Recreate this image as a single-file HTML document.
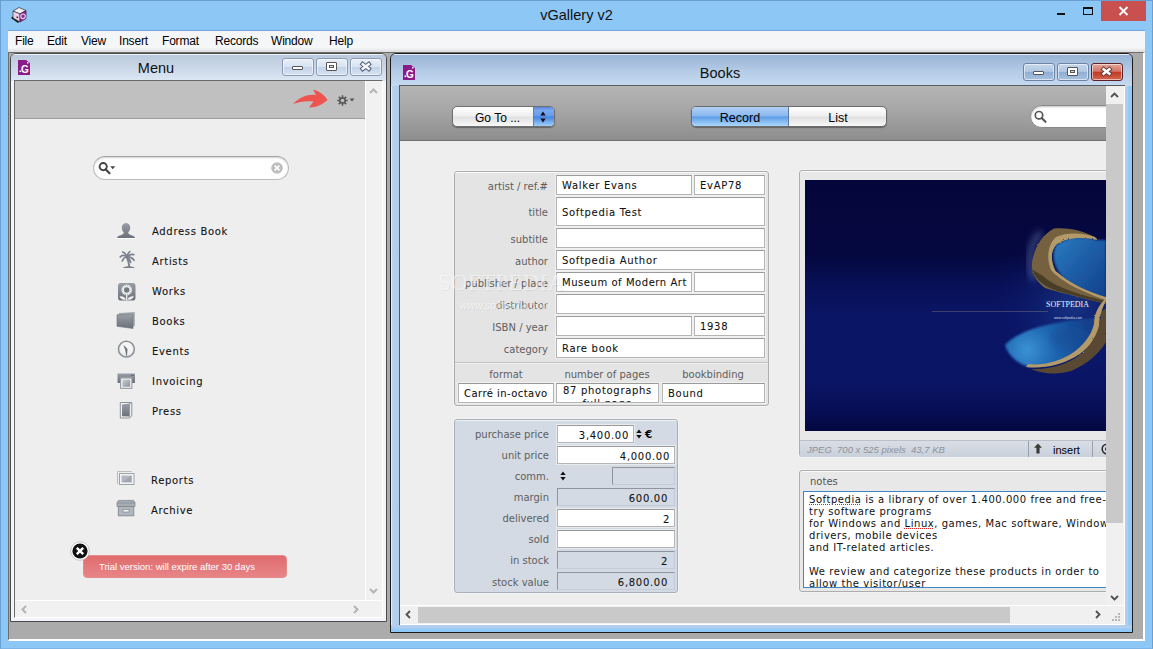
<!DOCTYPE html>
<html><head><meta charset="utf-8"><title>vGallery v2</title>
<style>
*{box-sizing:border-box;margin:0;padding:0}
html,body{width:1153px;height:649px;overflow:hidden}
body{position:relative;background:#8cc7f6;font-family:"Liberation Sans",sans-serif;color:#000}
.abs,.abs-all *{position:absolute}
div,span,svg{position:absolute}
#frame{left:0;top:0;width:1153px;height:649px;border:1px solid #6a9fd3;border-bottom-color:#7fb4e6;background:#8cc7f6}
#apptitle{left:0;top:5px;width:1153px;text-align:center;font-size:14.5px;color:#111;line-height:20px}
#menubar{left:8px;top:31px;width:1137px;height:21px;background:linear-gradient(#f4f5f7,#f6f7f9 80%,#dcdcdc);font-size:12px;line-height:20px;white-space:nowrap;letter-spacing:-0.2px}
#menubar span{top:0}
#mdi{left:8px;top:52px;width:1137px;height:589px;background:#ababab;border:1px solid;border-width:1px 2px 2px 1px;border-color:#6e6e6e #fff #fff #6e6e6e}
.v{font-family:"DejaVu Sans","Liberation Sans",sans-serif}
.cwtitle{font-size:14.5px;text-align:center;color:#111;line-height:18px}
.capbtn{border:1px solid #8a9ab5;border-radius:3px;height:18px;width:32px;background:linear-gradient(#e8eff8,#d7e3f2 48%,#c3d3e8 52%,#d6e2f1);box-shadow:inset 0 0 0 1px rgba(255,255,255,.55)}
.bb{background:linear-gradient(#c6d7ed,#b1c7e3 46%,#8faed4 52%,#a8c1e0);border-color:#6f83a5}
.mi{-webkit-text-stroke:.1px #111;left:152px;font-size:10px;letter-spacing:.68px;line-height:14px;white-space:nowrap;color:#111}
.lbl{margin-top:1px;font-size:10px;line-height:14px;color:#5e5e5e;text-align:right;white-space:nowrap}
.fld{-webkit-text-stroke:.08px #111;padding-top:1px;background:#fff;border:1px solid #b4b4b4;border-top-color:#9a9a9a;font-size:10px;letter-spacing:.7px;line-height:18px;padding-left:5px;white-space:nowrap;overflow:hidden;color:#111;box-shadow:0 0 0 1px rgba(255,255,255,.45)}
.num{text-align:right;padding-right:4px;padding-left:0}
.ro{background:#d3dae3;box-shadow:none;border-color:#8e959e #c5ccd5 #c5ccd5 #8e959e}
</style></head><body>
<div id="frame"></div>
<!-- app icon -->
<svg style="left:10px;top:6px" width="18" height="18" viewBox="0 0 18 18"><polygon points="1,12 8,17 9.500,15.500 2.500,10.500" fill="#151515"/><polygon points="3,5 9,1.500 16,4.500 10,8" fill="#f0ecf0" stroke="#34303a" stroke-width=".7"/><polygon points="3,5 10,8 10,16 3,12" fill="#e9d2e6" stroke="#34303a" stroke-width=".7"/><polygon points="10,8 16,4.500 16,12.500 10,16" fill="#8f2a92" stroke="#3a1a40" stroke-width=".7"/><circle cx="13" cy="10.300" r="2.300" fill="none" stroke="#f0c9ee" stroke-width="1.100"/><rect x="6.500" y="10.500" width="1.600" height="1.600" fill="#3a2a3a"/></svg>
<div id="apptitle">vGallery v2</div>
<!-- app caption buttons -->
<div style="left:1057px;top:13px;width:8px;height:2px;background:#111"></div>
<div style="left:1083px;top:7px;width:10px;height:8px;border:1px solid #111;border-top-width:2px"></div>
<div style="left:1101px;top:1px;width:45px;height:20px;background:#c8504f"></div>
<svg style="left:1118px;top:6px" width="11" height="10" viewBox="0 0 11 10"><path d="M1.5 1 L9.5 9 M9.5 1 L1.5 9" stroke="#fff" stroke-width="1.8"/></svg>
<div style="left:8px;top:30px;width:1137px;height:1px;background:#6ea8de"></div>
<div id="menubar"><span style="left:7px">File</span><span style="left:39px">Edit</span><span style="left:73px">View</span><span style="left:111px">Insert</span><span style="left:154px">Format</span><span style="left:207px">Records</span><span style="left:263px">Window</span><span style="left:321px">Help</span></div>
<div id="mdi"></div>

<!-- ================= MENU WINDOW ================= -->
<div id="mw" style="left:10px;top:53px;width:377px;height:569px;border:1px solid #4a4a4a;border-radius:6px 6px 0 0;background:#f3f5f9;overflow:hidden">
  <div style="left:0;top:0;width:375px;height:27px;background:linear-gradient(#eef3f9 0,#eef3f9 1px,#bac9dc 1px,#cad7e7 50%,#dde8f4)"></div>
</div>
<svg style="left:18px;top:60px" width="12" height="15" viewBox="0 0 12 15"><path d="M0 0H8L12 3V15H0Z" fill="#8b1a8b"/><text x="3" y="13" font-family="Liberation Sans" font-weight="bold" font-size="10" fill="#fff">G</text><rect x="1.5" y="10.5" width="1.6" height="1.6" fill="#fff"/><rect x="9" y="2" width="1.5" height="1.5" fill="#fff"/></svg>
<div class="cwtitle" style="left:106px;top:59px;width:100px">Menu</div>
<div class="capbtn" style="left:282px;top:58px"></div>
<div class="capbtn" style="left:316px;top:58px"></div>
<div class="capbtn" style="left:350px;top:58px"></div>
<div style="left:292px;top:66px;width:11px;height:4px;border:1px solid #555;background:#fff;border-radius:1px"></div>
<div style="left:326px;top:62px;width:11px;height:9px;border:1px solid #555;background:#fff;border-radius:1px"></div>
<div style="left:329px;top:65px;width:5px;height:3px;border:1px solid #555;background:#dde6f1"></div>
<svg style="left:359px;top:61px" width="14" height="11" viewBox="0 0 14 11"><path d="M3.700 3.200 L9.700 7.800 M9.700 3.200 L3.700 7.800" stroke="#56607a" stroke-width="4.400" stroke-linecap="square"/><path d="M3.700 3.200 L9.700 7.800 M9.700 3.200 L3.700 7.800" stroke="#f6f8fb" stroke-width="2.400" stroke-linecap="square"/></svg>
<!-- menu content -->
<div id="mc" style="left:14px;top:80px;width:369px;height:538px;border:1px solid;border-color:#6b6b6b #fff #fff #6b6b6b;background:#eeeeee;overflow:hidden">
  <div style="left:0;top:0;width:350px;height:38px;background:#c0c0c0;border-bottom:1px solid #9d9d9d"></div>
  <!-- vscroll -->
  <div style="left:350px;top:0;width:17px;height:520px;background:#f1f1f1;border-left:1px solid #fff"></div>
  <svg style="left:354px;top:7px" width="9" height="6" viewBox="0 0 9 6"><path d="M1 5 L4.5 1.5 L8 5" stroke="#b4b4b4" stroke-width="2" fill="none"/></svg>
  <svg style="left:354px;top:507px" width="9" height="6" viewBox="0 0 9 6"><path d="M1 1 L4.5 4.5 L8 1" stroke="#b4b4b4" stroke-width="2" fill="none"/></svg>
  <!-- hscroll -->
  <div style="left:0;top:519px;width:367px;height:18px;background:#f1f1f1;border-top:1px solid #fff"></div>
  <svg style="left:6px;top:524px" width="6" height="9" viewBox="0 0 6 9"><path d="M5 1 L1.5 4.5 L5 8" stroke="#b4b4b4" stroke-width="2" fill="none"/></svg>
  <svg style="left:338px;top:524px" width="6" height="9" viewBox="0 0 6 9"><path d="M1 1 L4.5 4.5 L1 8" stroke="#b4b4b4" stroke-width="2" fill="none"/></svg>
</div>
<!-- red arrow + gear -->
<svg style="left:292px;top:88px" width="38" height="22" viewBox="0 0 38 22"><path d="M1 16 C8 9 16 6 24 7 L21 1.5 C27 3 33 7 35.5 12 C31 16 25 19.5 17 19.5 L21.5 13.5 C14 12.5 7 14 1 16Z" fill="#ee5350"/></svg>
<svg style="left:336.500px;top:94.500px" width="11" height="11" viewBox="0 0 12 12"><g stroke="#555" stroke-width="1.7"><path d="M6 0.3V11.7M0.3 6H11.7M2 2L10 10M10 2L2 10"/></g><circle cx="6" cy="6" r="3.6" fill="#555"/><circle cx="6" cy="6" r="2" fill="#c0c0c0"/></svg>
<svg style="left:349px;top:98px" width="6" height="4" viewBox="0 0 6 4"><path d="M0.5 0.5H5.5L3 3.5Z" fill="#555"/></svg>
<!-- search box -->
<div style="left:93px;top:156px;width:196px;height:24px;border:1px solid #bcbcbc;border-top-color:#a2a2a2;border-radius:12px;background:#fff;box-shadow:inset 0 1px 2px rgba(0,0,0,.18)"></div>
<svg style="left:98px;top:161px" width="18" height="14" viewBox="0 0 18 14"><circle cx="5.2" cy="5.6" r="3.6" fill="none" stroke="#444" stroke-width="1.9"/><path d="M7.8 8.4 L11.5 12.3" stroke="#444" stroke-width="2.2" stroke-linecap="round"/><path d="M12.2 5.2H17.2L14.7 8.2Z" fill="#444"/></svg>
<svg style="left:271px;top:162px" width="12" height="12" viewBox="0 0 12 12"><circle cx="6" cy="6" r="5.8" fill="#bdbdbd"/><path d="M3.6 3.6L8.4 8.4M8.4 3.6L3.6 8.4" stroke="#fff" stroke-width="1.6"/></svg>
<!-- menu items -->
<div class="mi v" style="top:225px">Address Book</div>
<div class="mi v" style="top:255px">Artists</div>
<div class="mi v" style="top:285px">Works</div>
<div class="mi v" style="top:315px">Books</div>
<div class="mi v" style="top:345px">Events</div>
<div class="mi v" style="top:375px">Invoicing</div>
<div class="mi v" style="top:405px">Press</div>
<div class="mi v" style="top:474px;left:151px">Reports</div>
<div class="mi v" style="top:504px;left:151px">Archive</div>
<svg style="left:0;top:0;pointer-events:none" width="400" height="649" viewBox="0 0 400 649">
 <defs>
  <linearGradient id="ig" x1="0" y1="0" x2="0" y2="1"><stop offset="0" stop-color="#9a9fa6"/><stop offset="1" stop-color="#6b7079"/></linearGradient>
  <linearGradient id="ig2" x1="0" y1="0" x2="1" y2="1"><stop offset="0" stop-color="#c9ccd1"/><stop offset="1" stop-color="#8e939b"/></linearGradient>
 </defs>
 <!-- address book: person -->
 <path d="M126 223 C123.200 223 121.800 225.200 121.800 227.600 C121.800 229.800 122.600 231.600 123.800 232.600 C123.800 234 122.500 234.600 120.500 235.300 C118.500 236 117.200 236.600 117 238 L135 238 C134.800 236.600 133.500 236 131.500 235.300 C129.500 234.600 128.200 234 128.200 232.600 C129.400 231.600 130.200 229.800 130.200 227.600 C130.200 225.200 128.800 223 126 223Z" fill="url(#ig)"/>
 <rect x="117" y="238" width="18" height="1" fill="#fff"/>
 <!-- artists: palm -->
 <g fill="none" stroke="#7b8189" stroke-width="1.700" stroke-linecap="round">
  <path d="M127 257.500 C128.300 260.500 129 263.500 129.300 266.500" stroke-width="1.900"/>
  <path d="M127 257 C124.500 255 122 255 120.300 256.800"/>
  <path d="M127 257 C124.800 257.200 123 258.800 122.300 261"/>
  <path d="M127 257 C126.300 254.500 124.800 252.800 122.800 252"/>
  <path d="M127 257 C127.300 254.500 128.300 252.600 129.800 251.600"/>
  <path d="M127 257 C129 254.800 131.500 254 133.800 254.600"/>
  <path d="M127 257 C130 256.800 132.500 258 134 260.300"/>
  <path d="M127 257.500 C129 258.600 130.300 260.300 130.600 262.400"/>
 </g>
 <path d="M122.500 268 C125 265.700 132.500 265.700 135 268Z" fill="#7b8189"/>
 <!-- works: sunflower tile -->
 <rect x="118" y="283" width="17.500" height="17.500" rx="2.800" fill="url(#ig)"/>
 <g stroke="#f0f0f0" stroke-width="1.300"><path d="M126.700 284.600V295.400M121.300 290H132.100M122.900 286.200L130.500 293.800M130.500 286.200L122.900 293.800M124.600 285L128.800 295M128.800 285L124.600 295M121.700 287.900L131.700 292.100M131.700 287.900L121.700 292.100"/></g>
 <circle cx="126.700" cy="290" r="2.700" fill="#737881"/>
 <path d="M126.700 295V300.500" stroke="#f0f0f0" stroke-width="1.300"/>
 <path d="M126 299.500 C124.500 296.800 122 296 119.500 296.500 C120.500 299 123 300.300 126 299.500Z M127.400 299.500 C128.900 296.800 131.400 296 133.900 296.500 C132.900 299 130.400 300.300 127.400 299.500Z" fill="#f0f0f0"/>
 <!-- books -->
 <path d="M118.800 313 L134.800 312 L134.800 326 L132.800 326.500 L132.800 314.300 L118.800 314.800Z" fill="#a4a9b0"/>
 <path d="M117 314.800 L133 314.200 L133 328.500 L117 326.300Z" fill="url(#ig)"/>
 <path d="M117 314.800 L133 314.200 L133 328.500 L117 326.300Z" fill="none" stroke="#6b7079" stroke-width=".6"/>
 <!-- events: clock -->
 <circle cx="126.400" cy="349.200" r="7.900" fill="#eaeaea" stroke="#8a8f97" stroke-width="1.500"/>
 <circle cx="126.400" cy="348.200" r="6.200" fill="#f6f6f6" opacity=".8"/>
 <path d="M124 345.800 L127.100 349 L126.600 355.500 L125.600 349.800 Z" fill="#6b7079" stroke="#6b7079" stroke-width=".8" stroke-linejoin="round"/>
 <!-- invoicing: printer -->
 <path d="M117.500 373.500 H135 V383 H132 V377.800 H120.500 V383 H117.500Z" fill="url(#ig)"/>
 <rect x="131.300" y="374.800" width="2.400" height="1" fill="#555b63"/>
 <rect x="120.600" y="378" width="11.300" height="10.300" fill="#f4f4f4" stroke="#8d9299" stroke-width="1"/>
 <rect x="122.400" y="379.600" width="7.800" height="7.200" fill="url(#ig2)"/>
 <!-- press -->
 <path d="M120.300 402.500 L131.800 402.500 L131.800 416 L129 418 L120.300 418Z" fill="#f4f4f4" stroke="#8d9299" stroke-width="1"/>
 <path d="M122 404.500 L129.600 403.600 L129.600 416.600 L122 416.300Z" fill="url(#ig)"/>
 <path d="M129.600 403.600 L131.800 402.500 M129.600 416.600 L129.600 403.600" stroke="#8d9299" stroke-width=".8"/>
 <!-- reports -->
 <path d="M117.500 484 V471.500 H131.500" fill="none" stroke="#b9bdc3" stroke-width="1"/>
 <rect x="119.500" y="473.500" width="14.500" height="11" fill="#f4f4f4" stroke="#9da2a9" stroke-width="1"/>
 <rect x="121.500" y="475.500" width="10.500" height="7" fill="#b2b7bf"/>
 <path d="M122.500 482 L131 476 L131 482Z" fill="#a1a6ae"/>
 <!-- archive -->
 <path d="M118.500 500.400 H133.500 L135 502.600 V506.500 H117 V502.600Z" fill="#a7acb3" stroke="#858a92" stroke-width=".8"/>
 <rect x="118.300" y="506.500" width="15.500" height="9.300" fill="#b1b6bd" stroke="#858a92" stroke-width=".9"/>
 <rect x="123" y="509.500" width="6" height="2.500" fill="#f2f2f2" stroke="#858a92" stroke-width=".7"/>
 <path d="M117 503 H135" stroke="#858a92" stroke-width=".7"/>
</svg>

<!-- trial badge -->
<div style="left:83px;top:555px;width:204px;height:23px;border-radius:4px;background:linear-gradient(#e06c6e,#e88587);border:1px solid #e58a8b"></div>
<div style="left:99px;top:560px;font-size:9.5px;line-height:13px;color:#fff;white-space:nowrap">Trial version: will expire after 30 days</div>
<svg style="left:70px;top:541px" width="20" height="20" viewBox="0 0 20 20"><circle cx="10" cy="10" r="9.3" fill="#fff" stroke="#bbb" stroke-width=".8"/><circle cx="10" cy="10" r="7.6" fill="#111"/><path d="M6.8 6.8L13.2 13.2M13.2 6.8L6.8 13.2" stroke="#fff" stroke-width="2.4"/></svg>

<!-- ================= BOOKS WINDOW ================= -->
<div id="bw" style="left:390px;top:53px;width:743px;height:580px;border:1px solid #1a1a1a;border-radius:6px 6px 0 0;background:#b3cdec;overflow:hidden">
  <div style="left:0;top:0;width:741px;height:33px;background:linear-gradient(#e8f0fa 0,#e8f0fa 1px,#98b3d4 1px,#b4cbe6 50%,#c7dbf1)"></div>
  <div style="left:0;top:32px;width:8px;height:546px;background:linear-gradient(90deg,#e6eff9 0,#e6eff9 1px,#b9d1ed 1px,#b1cbea)"></div>
  <div style="left:733px;top:32px;width:8px;height:546px;background:linear-gradient(90deg,#b3cdec 40%,#8fcaf8 60%)"></div>
  <div style="left:0;top:571px;width:741px;height:7px;background:linear-gradient(#b3cdec 40%,#8fcaf8 60%)"></div>
</div>
<svg style="left:403px;top:65px" width="12" height="15" viewBox="0 0 12 15"><path d="M0 0H8L12 3V15H0Z" fill="#8b1a8b"/><text x="3" y="13" font-family="Liberation Sans" font-weight="bold" font-size="10" fill="#fff">G</text><rect x="1.5" y="10.5" width="1.6" height="1.6" fill="#fff"/><rect x="9" y="2" width="1.5" height="1.5" fill="#fff"/></svg>
<div class="cwtitle" style="left:670px;top:64px;width:100px">Books</div>
<div class="capbtn bb" style="left:1023px;top:63px"></div>
<div class="capbtn bb" style="left:1057px;top:63px"></div>
<div class="capbtn" style="left:1091px;top:63px;width:32px;border-color:#5c2228;background:linear-gradient(#e5a598,#d4766a 45%,#c13a25 52%,#d3674f)"></div>
<div style="left:1033px;top:71px;width:11px;height:4px;border:1px solid #555;background:#fff;border-radius:1px"></div>
<div style="left:1067px;top:67px;width:11px;height:9px;border:1px solid #555;background:#fff;border-radius:1px"></div>
<div style="left:1070px;top:70px;width:5px;height:3px;border:1px solid #555;background:#c9d8ea"></div>
<svg style="left:1100px;top:66px" width="13" height="11" viewBox="0 0 13 11"><path d="M3.600 3.300 L9.400 7.700 M9.400 3.300 L3.600 7.700" stroke="#5e3a3a" stroke-width="4.400" stroke-linecap="square"/><path d="M3.600 3.300 L9.400 7.700 M9.400 3.300 L3.600 7.700" stroke="#fff" stroke-width="2.500" stroke-linecap="square"/></svg>

<div id="bc" style="left:399px;top:85px;width:726px;height:540px;background:#eeeeee;overflow:hidden">
 <!-- toolbar -->
 <div style="left:0;top:0;width:707px;height:56px;background:linear-gradient(#b5b5b5,#a4a4a4 50%,#8d8d8d);border-bottom:1px solid #6f6f6f;border-top:1px solid #5a5a5a"></div>
 <!-- go to -->
 <div style="left:53px;top:21px;width:103px;height:21px;border-radius:5px;border:1px solid #707070;background:linear-gradient(#fefefe,#efefef 48%,#e0e0e0 52%,#f8f8f8);box-shadow:0 1px 1px rgba(0,0,0,.35);overflow:hidden">
   <div style="left:80px;top:-1px;width:23px;height:21px;background:linear-gradient(#4f78d2,#7aa8ee 20%,#6a9dea 45%,#4685e2 52%,#a9d7fb);border-left:1px solid #5a7fc8"></div>
 </div>
 <div style="left:76px;top:26px;font-size:12px;line-height:14px;white-space:nowrap">Go To ...</div>
 <svg style="left:141px;top:26px" width="6" height="12" viewBox="0 0 6 12"><path d="M3 0.500L5.700 4.500H0.300Z M3 11.500L5.700 7.500H0.300Z" fill="#111"/></svg>
 <!-- record / list -->
 <div style="left:292px;top:21px;width:196px;height:21px;border-radius:5px;border:1px solid #6a6a6a;background:linear-gradient(#fefefe,#efefef 48%,#e0e0e0 52%,#f8f8f8);box-shadow:0 1px 1px rgba(0,0,0,.35);overflow:hidden">
   <div style="left:-1px;top:-1px;width:98px;height:21px;background:linear-gradient(#4a6fd0 0,#b0cef4 1.500px,#8cb9f0 46%,#5f9dea 52%,#b4defc);border-right:1px solid #5a7aa8"></div>
 </div>
 <div style="left:292px;top:26px;width:98px;text-align:center;font-size:12.5px;line-height:14px">Record</div>
 <div style="left:390px;top:26px;width:98px;text-align:center;font-size:12.5px;line-height:14px">List</div>
 <!-- search -->
 <div style="left:631px;top:20px;width:100px;height:23px;border-radius:11.5px;border:1px solid #8a8a8a;background:#fff;box-shadow:inset 0 1px 2px rgba(0,0,0,.25)"></div>
 <svg style="left:635px;top:25px" width="14" height="14" viewBox="0 0 14 14"><circle cx="5" cy="5.200" r="3.700" fill="none" stroke="#555" stroke-width="1.700"/><path d="M7.700 8 L11.500 11.800" stroke="#555" stroke-width="2.100" stroke-linecap="round"/></svg>

 <!-- main panel -->
 <div style="left:55px;top:86px;width:315px;height:235px;background:#e4e4e4;border:1px solid #adadad;border-radius:3px;box-shadow:inset 0 1px 0 #fbfbfb,0 0 0 1px #f3f3f3"></div>
 <div style="left:56px;top:277px;width:313px;height:1px;background:#c2c2c2;border-bottom:1px solid #f2f2f2;height:2px"></div>
 <div class="lbl v" style="left:56px;width:93px;top:94px">artist / ref.#</div>
 <div class="lbl v" style="left:56px;width:93px;top:120px">title</div>
 <div class="lbl v" style="left:56px;width:93px;top:147px">subtitle</div>
 <div class="lbl v" style="left:56px;width:93px;top:169px">author</div>
 <div class="lbl v" style="left:56px;width:93px;top:191px">publisher / place</div>
 <div class="lbl v" style="left:56px;width:93px;top:213px">distributor</div>
 <div class="lbl v" style="left:56px;width:93px;top:235px">ISBN / year</div>
 <div class="lbl v" style="left:56px;width:93px;top:257px">category</div>
 <div class="fld v" style="left:157px;top:90px;width:136px;height:20px">Walker Evans</div>
 <div class="fld v" style="left:295px;top:90px;width:71px;height:20px">EvAP78</div>
 <div class="fld v" style="left:157px;top:112px;width:209px;height:29px;line-height:27px">Softpedia Test</div>
 <div class="fld v" style="left:157px;top:143px;width:209px;height:20px"></div>
 <div class="fld v" style="left:157px;top:165px;width:209px;height:20px">Softpedia Author</div>
 <div class="fld v" style="left:157px;top:187px;width:136px;height:20px;letter-spacing:.55px">Museum of Modern Art</div>
 <div class="fld v" style="left:295px;top:187px;width:71px;height:20px"></div>
 <div class="fld v" style="left:157px;top:209px;width:209px;height:20px"></div>
 <div class="fld v" style="left:157px;top:231px;width:136px;height:20px"></div>
 <div class="fld v" style="left:295px;top:231px;width:71px;height:20px">1938</div>
 <div class="fld v" style="left:157px;top:253px;width:209px;height:20px">Rare book</div>
 <div class="lbl v" style="left:59px;width:96px;top:282px;text-align:center">format</div>
 <div class="lbl v" style="left:157px;width:102px;top:282px;text-align:center">number of pages</div>
 <div class="lbl v" style="left:263px;width:102px;top:282px;text-align:center">bookbinding</div>
 <div class="fld v" style="left:59px;top:298px;width:96px;height:20px;letter-spacing:.45px">Carré in-octavo</div>
 <div class="fld v" style="left:157px;top:298px;width:103px;height:20px;line-height:13px;text-align:center;padding:0;white-space:normal">87 photographs full page</div>
 <div class="fld v" style="left:263px;top:298px;width:103px;height:20px">Bound</div>

 <!-- price panel -->
 <div style="left:55px;top:334px;width:224px;height:174px;background:#d3dae3;border:1px solid #a9b0ba;border-radius:3px;box-shadow:inset 0 1px 0 #eef2f7,0 0 0 1px #f3f3f3"></div>
 <div class="lbl v" style="left:56px;width:94px;top:342px">purchase price</div>
 <div class="lbl v" style="left:56px;width:94px;top:363px">unit price</div>
 <div class="lbl v" style="left:56px;width:94px;top:384px">comm.</div>
 <div class="lbl v" style="left:56px;width:94px;top:405px">margin</div>
 <div class="lbl v" style="left:56px;width:94px;top:426px">delivered</div>
 <div class="lbl v" style="left:56px;width:94px;top:447px">sold</div>
 <div class="lbl v" style="left:56px;width:94px;top:468px">in stock</div>
 <div class="lbl v" style="left:56px;width:94px;top:490px">stock value</div>
 <div class="fld num v" style="left:158px;top:340px;width:77px;height:18px">3,400.00</div>
 <svg style="left:237px;top:344px" width="6" height="10" viewBox="0 0 6 10"><path d="M3 0.5L5.7 4H0.3Z M3 9.5L5.7 6H0.3Z" fill="#111"/></svg>
 <div class="v" style="left:246px;top:342px;font-size:10.5px;font-weight:bold;line-height:14px">€</div>
 <div class="fld num v" style="left:158px;top:361px;width:118px;height:18px">4,000.00</div>
 <svg style="left:161px;top:386px" width="6" height="10" viewBox="0 0 6 10"><path d="M3 0.5L5.7 4H0.3Z M3 9.5L5.7 6H0.3Z" fill="#111"/></svg>
 <div class="fld ro num v" style="left:213px;top:382px;width:63px;height:18px"></div>
 <div class="fld ro num v" style="left:158px;top:403px;width:118px;height:18px;padding-right:6px">600.00</div>
 <div class="fld num v" style="left:158px;top:424px;width:118px;height:18px">2</div>
 <div class="fld num v" style="left:158px;top:445px;width:118px;height:18px"></div>
 <div class="fld ro num v" style="left:158px;top:466px;width:118px;height:18px;padding-right:6px">2</div>
 <div class="fld ro num v" style="left:158px;top:487px;width:118px;height:18px;padding-right:6px">6,800.00</div>

 <!-- image panel -->
 <div style="left:400px;top:85px;width:320px;height:287px;background:#e8e8e8;border:1px solid #adadad;border-radius:3px;box-shadow:inset 0 1px 0 #fbfbfb,0 0 0 1px #f3f3f3"></div>
 <svg style="left:406px;top:95px" width="301" height="251" viewBox="0 0 301 251">
  <defs>
   <linearGradient id="bgg" x1="0" y1="0" x2="0" y2="1"><stop offset="0" stop-color="#04053a"/><stop offset=".3" stop-color="#05083f"/><stop offset=".42" stop-color="#081056"/><stop offset=".55" stop-color="#0a1566"/><stop offset=".82" stop-color="#0a1464"/><stop offset=".92" stop-color="#070e54"/><stop offset="1" stop-color="#040840"/></linearGradient>
   <radialGradient id="glow" cx="268" cy="125" r="85" gradientUnits="userSpaceOnUse"><stop offset="0" stop-color="#244f9f" stop-opacity=".55"/><stop offset=".5" stop-color="#132c80" stop-opacity=".3"/><stop offset="1" stop-color="#0a176a" stop-opacity="0"/></radialGradient>
   <linearGradient id="lag1" x1="0" y1="0" x2="1" y2="1"><stop offset="0" stop-color="#2a7cc0"/><stop offset=".5" stop-color="#1d5ca6"/><stop offset="1" stop-color="#123f8a"/></linearGradient>
   <radialGradient id="lag2" cx="222" cy="170" r="66" gradientUnits="userSpaceOnUse"><stop offset="0" stop-color="#3a92d4"/><stop offset=".4" stop-color="#2068b2"/><stop offset="1" stop-color="#133f8c"/></radialGradient>
   <filter id="bl" x="-20%" y="-20%" width="140%" height="140%"><feGaussianBlur stdDeviation="1.1"/></filter>
   <filter id="bl2" x="-20%" y="-20%" width="140%" height="140%"><feGaussianBlur stdDeviation=".5"/></filter>
   <filter id="bl3" x="-30%" y="-30%" width="160%" height="160%"><feGaussianBlur stdDeviation="3.5"/></filter>
   <filter id="rough" x="-10%" y="-10%" width="120%" height="120%"><feTurbulence type="fractalNoise" baseFrequency=".35" numOctaves="2" seed="4" result="n"/><feDisplacementMap in="SourceGraphic" in2="n" scale="1.800"/><feGaussianBlur stdDeviation=".600"/></filter>
  </defs>
  <rect width="301" height="251" fill="url(#bgg)"/>
  <rect width="301" height="251" fill="url(#glow)"/>
  <path d="M127 131.500H243" stroke="#8a8474" stroke-opacity=".45" stroke-width=".9"/>
  <!-- white surf glow upper-left -->
  <path d="M236 52 C224 64 222 86 230 100" stroke="#8fa4d8" stroke-opacity=".45" stroke-width="5" fill="none" filter="url(#bl3)"/>
  <!-- upper lagoon -->
  <path d="M292 60 C277 55 261 57 251 65 C245 77 250 91 264 103 C275 110 290 116 301 119 L301 60Z" fill="url(#lag1)" filter="url(#bl)"/>
  <!-- lower lagoon -->
  <path d="M200 165 C210 154 232 146 252 143 C270 139 285 138 296 138 C296 150 288 166 270 176 C255 184 235 188 221 186 C210 182 203 174 200 165Z" fill="url(#lag2)" filter="url(#bl)"/>
  <ellipse cx="266" cy="158" rx="20" ry="11" fill="#154a98" fill-opacity=".55" filter="url(#bl3)"/>
  <g filter="url(#rough)">
  <!-- upper rock (dark) -->
  <path d="M292 58.500 C280 51 264 47 249 48.500 C238 54 230 66 227 82 C226 92 230 100 240 108 C252 112 270 116 301 124 L301 118 C283 112.500 264 103 250.500 91 C245 80 246 70 251 64.500 C261 57 277 56 292 60Z" fill="#74613f"/>
  <path d="M228 90 C230 100 240 108 258 112.500 L301 124 L301 121 C280 116 250 108 238 96Z" fill="#4a3d28"/>
  <!-- tan inner strip -->
  <path d="M290 57 C278 52.500 262 52 251 57 C243 64 241 78 246 90 C256 102 280 113 301 120 L301 117 C283 112 264 103 250.500 91 C245 80 246 70 251.500 64.500 C261 57.500 277 56.500 292 60Z" fill="#b39a6a"/>
  <!-- lower dark rock -->
  <path d="M301 128 L301 162 C294 174 282 184 266 191 C252 195 238 194 226 189 C245 190 262 184 275 175 C288 164 296 146 296 132Z" fill="#5a4a30"/>
  <!-- lower tan strip -->
  <path d="M301 121 C297 128 294 138 294 146 C290 160 282 170 270 177 C256 185 238 189 221 187 L223 184 C238 186 254 181 266 174 C278 166 286 156 289 144 C289 134 293 126 301 118Z" fill="#b39a6a"/>
  </g>
  <text x="241" y="126.500" font-family="Liberation Serif, serif" font-size="7.200" fill="#f1f1f6" textLength="43" lengthAdjust="spacingAndGlyphs">SOFTPEDIA</text>
  <text x="249" y="138.500" font-family="Liberation Sans, sans-serif" font-size="3.400" fill="#d8dcf0" textLength="28" lengthAdjust="spacingAndGlyphs">www.softpedia.com</text>
</svg>

 <div style="left:401px;top:355px;width:320px;height:17px;background:linear-gradient(#d9dee6,#c9d0da);border-top:1px solid #b9c0ca"></div>
 <div style="left:408px;top:358px;font-size:9.5px;line-height:13px;font-style:italic;color:#8c929b;white-space:pre">JPEG  700 x 525 pixels  43,7 KB</div>
 <div style="left:629px;top:356px;width:1px;height:16px;background:#9aa1ab"></div>
 <div style="left:693px;top:356px;width:1px;height:16px;background:#9aa1ab"></div>
 <svg style="left:634px;top:358px" width="10" height="12" viewBox="0 0 10 12"><path d="M5 0.500L9 4.800H6.600V10.500H3.400V4.800H1Z" fill="#3c3c3c"/></svg>
 <div style="left:654px;top:358px;font-size:11px;line-height:14px;white-space:nowrap">insert</div>
 <svg style="left:702px;top:358px" width="12" height="12" viewBox="0 0 12 12"><circle cx="6" cy="6" r="4.8" fill="none" stroke="#222" stroke-width="1.5"/><circle cx="6" cy="6" r="2" fill="#222"/></svg>

 <!-- notes panel -->
 <div style="left:400px;top:385px;width:320px;height:122px;background:#e8e8e8;border:1px solid #adadad;border-radius:3px;box-shadow:inset 0 1px 0 #fbfbfb,0 0 0 1px #f3f3f3"></div>
 <div class="v" style="left:411px;top:390px;font-size:10px;line-height:14px;color:#555">notes</div>
 <div class="v" style="left:404px;top:406px;width:320px;height:97px;background:#fff;border:1px solid #3d85c6;font-size:10px;line-height:12px;padding:2px 0 0 5px;white-space:nowrap;overflow:hidden;color:#111;letter-spacing:.55px"><span style="position:static;text-decoration:underline dotted #e02020 1px;text-underline-offset:1px">Softpedia</span> is a library of over 1.400.000 free and free-to-<br>try software programs<br>for Windows and <span style="position:static;text-decoration:underline dotted #e02020 1px;text-underline-offset:1px">Linux</span>, games, Mac software, Windows<br>drivers, mobile devices<br>and IT-related articles.<br><br>We review and categorize these products in order to<br>allow the visitor/user</div>

 <div style="left:0;top:0;width:1px;height:540px;background:#5a5a5a"></div>
 <!-- v scroll -->
 <div style="left:0;top:0;width:726px;height:1px;background:#5a5a5a;z-index:3"></div>
 <div style="left:707px;top:1px;width:19px;height:521px;background:#f0f0f0"></div>
 <div style="left:707px;top:19px;width:17px;height:419px;background:#c9c9c9"></div>
 <svg style="left:711px;top:7px" width="9" height="6" viewBox="0 0 9 6"><path d="M1 5 L4.5 1.5 L8 5" stroke="#505050" stroke-width="1.8" fill="none"/></svg>
 <svg style="left:711px;top:510px" width="9" height="6" viewBox="0 0 9 6"><path d="M1 1 L4.5 4.5 L8 1" stroke="#505050" stroke-width="1.8" fill="none"/></svg>
 <!-- h scroll -->
 <div style="left:1px;top:520px;width:726px;height:20px;background:#f0f0f0;border-top:1px solid #fff"></div>
 <div style="left:19px;top:522px;width:592px;height:16px;background:#c9c9c9"></div>
 <svg style="left:6px;top:525px" width="6" height="9" viewBox="0 0 6 9"><path d="M5 1 L1.5 4.5 L5 8" stroke="#505050" stroke-width="1.8" fill="none"/></svg>
 <svg style="left:696px;top:525px" width="6" height="9" viewBox="0 0 6 9"><path d="M1 1 L4.5 4.5 L1 8" stroke="#505050" stroke-width="1.8" fill="none"/></svg>
 <svg style="left:712px;top:527px" width="10" height="10" viewBox="0 0 10 10"><g fill="#b8b8b8"><rect x="7" y="1" width="2" height="2"/><rect x="4" y="4" width="2" height="2"/><rect x="7" y="4" width="2" height="2"/><rect x="1" y="7" width="2" height="2"/><rect x="4" y="7" width="2" height="2"/><rect x="7" y="7" width="2" height="2"/></g></svg>
 <div style="left:725px;top:1px;width:1px;height:539px;background:#fff"></div>
 <div style="left:1px;top:539px;width:725px;height:1px;background:#fff"></div>
</div>

<div style="left:438px;top:270px;font-family:'Liberation Serif',serif;font-size:23px;line-height:26px;color:rgba(255,255,255,.5);text-shadow:1px 1px 0 rgba(0,0,0,.06);white-space:nowrap;letter-spacing:.3px">SOFTPEDIA</div>
<div style="left:460px;top:298px;font-size:10.5px;line-height:14px;font-style:italic;color:rgba(255,255,255,.55);text-shadow:1px 1px 0 rgba(0,0,0,.06);white-space:nowrap">www.softpedia.com</div>
</body></html>
